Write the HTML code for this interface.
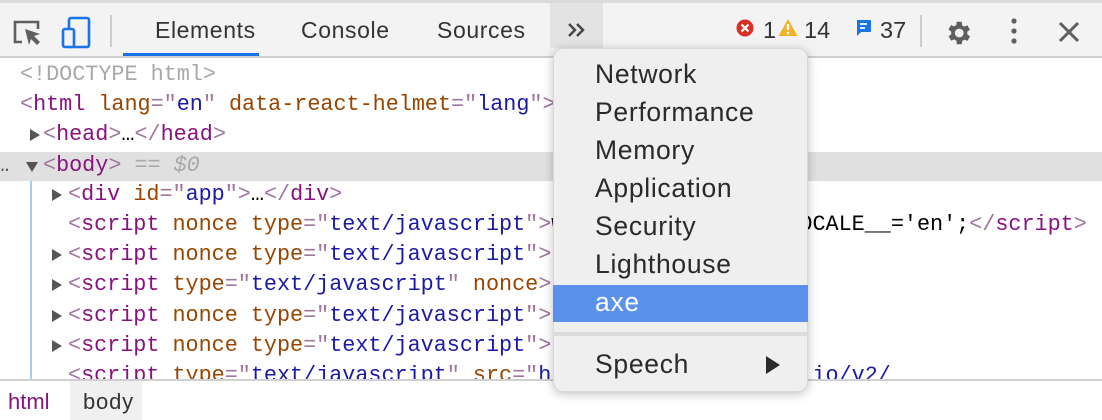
<!DOCTYPE html>
<html><head><style>
*{margin:0;padding:0;box-sizing:border-box}
body{width:1102px;height:420px;overflow:hidden;background:#fff;position:relative;font-family:"Liberation Sans",sans-serif}
.tb{position:absolute;left:0;top:0;width:1102px;height:58px;background:#f3f3f3;border-top:3px solid #dadada;border-bottom:2px solid #cfcfcf}
.tab{position:absolute;top:14px;font-size:23px;letter-spacing:0.6px;color:#333}
.ab{position:absolute}
.code{position:absolute;left:0;top:58px;width:1102px;height:321px;overflow:hidden;font-family:"Liberation Mono",monospace;font-size:21.8px;letter-spacing:-0.02px}
.ln{position:absolute;height:30px;line-height:30px;white-space:pre}
.t{color:#881280}.p{color:#a0769e}.a{color:#994500}.v{color:#1a1aa6}.g{color:#a8a8a8}
.tri{position:absolute;width:0;height:0;border-top:6px solid transparent;border-bottom:6px solid transparent;border-left:10px solid #555}
.menu{position:absolute;left:553px;top:48px;width:255px;height:344px;background:#efefef;border-radius:10px;box-shadow:0 2px 10px rgba(0,0,0,.25);border:1px solid #d8d8d8}
.mi{position:absolute;left:41px;font-size:26.5px;letter-spacing:0.7px;color:#2a2a2a;line-height:38px}
.bb{position:absolute;left:0;top:379px;width:1102px;height:41px;background:#fff;border-top:2px solid #d0d0d0}
.cnt{position:absolute;top:14px;font-size:23.5px;color:#333}
</style></head><body>
<div class="tb">
<svg class="ab" style="left:12px;top:15px" width="32" height="30" viewBox="0 0 32 30"><path d="M10 24H3V4h23v7" fill="none" stroke="#5f5f5f" stroke-width="2.6"/><path d="M13 11l15 5-6 2 6 6-3 3-6-6-2 6z" fill="#5f5f5f"/></svg>
<svg class="ab" style="left:60px;top:12px" width="34" height="34" viewBox="0 0 34 34"><rect x="9" y="3" width="20" height="29" rx="2" fill="none" stroke="#1a73e8" stroke-width="2.6"/><rect x="3" y="14" width="11" height="18" rx="2" fill="#f3f3f3" stroke="#1a73e8" stroke-width="2.6"/></svg>
<div class="ab" style="left:110px;top:12px;width:2px;height:32px;background:#ccc"></div>
<div class="tab" style="left:155px">Elements</div>
<div class="ab" style="left:123px;top:50px;width:136px;height:3px;background:#1a73e8"></div>
<div class="tab" style="left:301px">Console</div>
<div class="tab" style="left:437px">Sources</div>
<div class="ab" style="left:550px;top:0;width:53px;height:45px;background:#e3e3e3"></div>
<svg class="ab" style="left:567px;top:20px" width="20" height="14"><path d="M2 1l6 6-6 6M10 1l6 6-6 6" fill="none" stroke="#444" stroke-width="2.4"/></svg>
<svg class="ab" style="left:736px;top:16px" width="18" height="18"><circle cx="9" cy="9" r="8.5" fill="#d93025"/><path d="M5.5 5.5l7 7M12.5 5.5l-7 7" stroke="#fff" stroke-width="2.2"/></svg>
<div class="cnt" style="left:763px">1</div>
<svg class="ab" style="left:778px;top:15px" width="20" height="19"><path d="M10 1L19.5 18H.5z" fill="#f0b22b"/><path d="M10 6v6" stroke="#fff" stroke-width="2.4"/><circle cx="10" cy="15" r="1.3" fill="#fff"/></svg>
<div class="cnt" style="left:804px">14</div>
<svg class="ab" style="left:855px;top:16px" width="17" height="19"><path d="M2 1h13a1 1 0 0 1 1 1v10a1 1 0 0 1-1 1H6l-4 4z" fill="#1a73e8"/><path d="M5 5h7M5 9h5" stroke="#fff" stroke-width="1.8"/></svg>
<div class="cnt" style="left:880px">37</div>
<div class="ab" style="left:920px;top:12px;width:2px;height:32px;background:#ccc"></div>
<svg class="ab" style="left:943px;top:15px" width="30" height="30" viewBox="0 0 24 24"><path fill="#5f5f5f" d="M19.4 13a7.5 7.5 0 0 0 0-2l2.1-1.6-2-3.5-2.5 1a7 7 0 0 0-1.7-1L15 3h-4l-.4 2.7a7 7 0 0 0-1.7 1l-2.5-1-2 3.5L6.6 11a7.5 7.5 0 0 0 0 2l-2.1 1.6 2 3.5 2.5-1a7 7 0 0 0 1.7 1L11 21h4l.4-2.7a7 7 0 0 0 1.7-1l2.5 1 2-3.5zM13 15.5a3.5 3.5 0 1 1 0-7 3.5 3.5 0 0 1 0 7z"/></svg>
<svg class="ab" style="left:1007px;top:14px" width="14" height="30"><circle cx="7" cy="4" r="2.6" fill="#5f5f5f"/><circle cx="7" cy="14" r="2.6" fill="#5f5f5f"/><circle cx="7" cy="24" r="2.6" fill="#5f5f5f"/></svg>
<svg class="ab" style="left:1058px;top:18px" width="22" height="22"><path d="M2 2l18 18M20 2L2 20" stroke="#5f5f5f" stroke-width="3"/></svg>
</div>
<div class="code">
<div class="ab" style="left:0;top:94px;width:1102px;height:29px;background:#e0e0e0"></div>
<div class="ab" style="left:30px;top:123px;width:2px;height:200px;background:#a8c7fa"></div>
<div class="ln g" style="left:20px;top:2px">&lt;!DOCTYPE html&gt;</div>
<div class="ln" style="left:20px;top:32px"><span class="p">&lt;</span><span class="t">html</span> <span class="a">lang</span><span class="p">="</span><span class="v">en</span><span class="p">"</span> <span class="a">data-react-helmet</span><span class="p">="</span><span class="v">lang</span><span class="p">"&gt;</span></div>
<div class="tri" style="left:30px;top:71px"></div>
<div class="ln" style="left:43px;top:62px"><span class="p">&lt;</span><span class="t">head</span><span class="p">&gt;</span>…<span class="p">&lt;/</span><span class="t">head</span><span class="p">&gt;</span></div>
<div class="ln" style="left:-4px;top:93px;color:#555">…</div>
<div class="ab" style="left:26px;top:104px;width:0;height:0;border-left:6px solid transparent;border-right:6px solid transparent;border-top:10px solid #555"></div>
<div class="ln" style="left:43px;top:93px"><span class="p">&lt;</span><span class="t">body</span><span class="p">&gt;</span> <span class="g">==</span> <i class="g">$0</i></div>
<div class="tri" style="left:52px;top:131px"></div>
<div class="ln" style="left:68px;top:122px"><span class="p">&lt;</span><span class="t">div</span> <span class="a">id</span><span class="p">="</span><span class="v">app</span><span class="p">"&gt;</span>…<span class="p">&lt;/</span><span class="t">div</span><span class="p">&gt;</span></div>
<div class="ln" style="left:68px;top:152px"><span class="p">&lt;</span><span class="t">script</span> <span class="a">nonce</span> <span class="a">type</span><span class="p">="</span><span class="v">text/javascript</span><span class="p">"&gt;</span>window.__APP_INIT_LOCALE__='en';<span class="p">&lt;/</span><span class="t">script</span><span class="p">&gt;</span></div>
<div class="tri" style="left:52px;top:191px"></div>
<div class="ln" style="left:68px;top:182px"><span class="p">&lt;</span><span class="t">script</span> <span class="a">nonce</span> <span class="a">type</span><span class="p">="</span><span class="v">text/javascript</span><span class="p">"&gt;</span></div>
<div class="tri" style="left:52px;top:221px"></div>
<div class="ln" style="left:68px;top:212px"><span class="p">&lt;</span><span class="t">script</span> <span class="a">type</span><span class="p">="</span><span class="v">text/javascript</span><span class="p">"</span> <span class="a">nonce</span><span class="p">&gt;</span></div>
<div class="tri" style="left:52px;top:252px"></div>
<div class="ln" style="left:68px;top:243px"><span class="p">&lt;</span><span class="t">script</span> <span class="a">nonce</span> <span class="a">type</span><span class="p">="</span><span class="v">text/javascript</span><span class="p">"&gt;</span></div>
<div class="tri" style="left:52px;top:282px"></div>
<div class="ln" style="left:68px;top:273px"><span class="p">&lt;</span><span class="t">script</span> <span class="a">nonce</span> <span class="a">type</span><span class="p">="</span><span class="v">text/javascript</span><span class="p">"&gt;</span></div>
<div class="ln" style="left:68px;top:303px"><span class="p">&lt;</span><span class="t">script</span> <span class="a">type</span><span class="p">="</span><span class="v">text/javascript</span><span class="p">"</span> <span class="a">src</span><span class="p">="</span><span class="v">https://cdn.polyfill.io/v2/</span></div>
</div>
<div class="bb">
<div class="ab" style="left:8px;top:8px;font-size:22px;color:#881280">html</div>
<div class="ab" style="left:70px;top:0;width:72px;height:39px;background:#f0f0f0"></div>
<div class="ab" style="left:83px;top:8px;font-size:22px;letter-spacing:0.8px;color:#333">body</div>
</div>
<div class="menu">
<div class="mi" style="top:6px">Network</div>
<div class="mi" style="top:44px">Performance</div>
<div class="mi" style="top:82px">Memory</div>
<div class="mi" style="top:120px">Application</div>
<div class="mi" style="top:158px">Security</div>
<div class="mi" style="top:196px">Lighthouse</div>
<div class="ab" style="left:-1px;top:236px;width:255px;height:37px;background:#5a91ec"></div>
<div class="mi" style="top:234px;color:#fff">axe</div>
<div class="ab" style="left:-1px;top:283px;width:255px;height:4px;background:#dcdcdc"></div>
<div class="mi" style="top:296px">Speech</div>
<div class="ab" style="left:212px;top:307px;width:0;height:0;border-top:9px solid transparent;border-bottom:9px solid transparent;border-left:14px solid #2a2a2a"></div>
</div>
</body></html>
